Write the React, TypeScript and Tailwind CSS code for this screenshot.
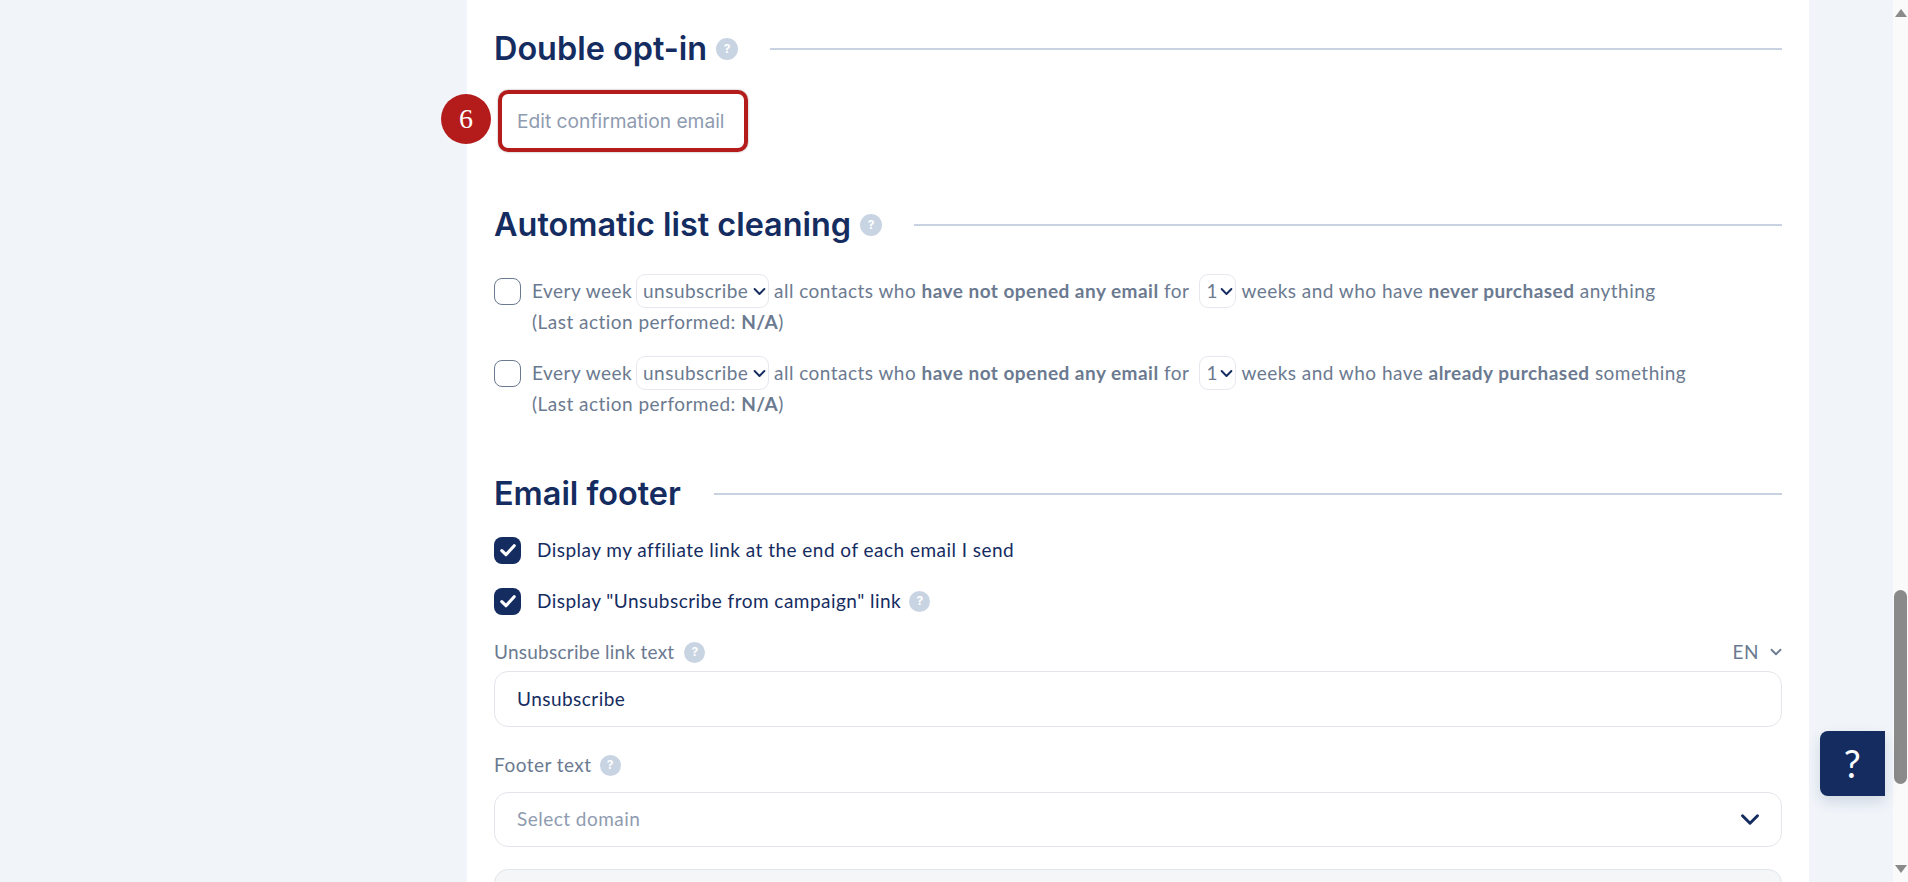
import React from "react";

const body = "font-['Lato','Noto_Sans',sans-serif] tracking-[0.47px]";

function Help({ size = "w-[21px] h-[21px]", text = "text-[12px]" }: { size?: string; text?: string }) {
  return (
    <span className={`${size} ${text} shrink-0 rounded-full bg-[#c9d4e3] text-white font-bold flex items-center justify-center tracking-normal font-['Inter',sans-serif]`}>?</span>
  );
}

function Heading({ title, help }: { title: string; help?: boolean }) {
  return (
    <div className="flex items-center h-[40px]">
      <h2 className="font-['Inter',sans-serif] font-semibold text-[32.4px] leading-[40px] text-[#152c61] tracking-normal whitespace-nowrap">{title}</h2>
      {help && <span className="ml-[9px]"><Help size="w-[22px] h-[22px]" /></span>}
      <div className={`flex-1 h-[2px] bg-[#c9d2e0] ${help ? "ml-[32px]" : "ml-[33px]"}`} />
    </div>
  );
}

function Chev({ className = "" }: { className?: string }) {
  return (
    <svg viewBox="0 0 16 10" className={className} fill="none" stroke="currentColor" strokeWidth="2.4" strokeLinecap="round" strokeLinejoin="round">
      <path d="M2 2l6 6 6-6" />
    </svg>
  );
}

function MiniSelect({ value, w }: { value: string; w: string }) {
  return (
    <span className={`${w} h-[34px] inline-flex items-center justify-between pl-[6px] pr-[2px] ml-[4px] mr-[5px] rounded-[9px] border border-[#e5e8ee] text-[#6b7a90] text-[19px] align-middle shrink-0`}>
      <span>{value}</span>
      <Chev className="w-[13px] h-[9px] text-[#152c61]" />
    </span>
  );
}

function CleanRow({ strong, tail }: { strong: string; tail: string }) {
  return (
    <div className="flex items-start">
      <span className="mt-[6px] w-[27px] h-[27px] shrink-0 rounded-[8px] border border-[#6b7a90] bg-white" />
      <div className="ml-[11px] text-[19px] leading-[30px] text-[#6b7a90] whitespace-nowrap">
        <div className="flex items-center h-[38px]">
          <span>Every week</span>
          <MiniSelect value="unsubscribe" w="w-[133px]" />
          <span>all contacts who&nbsp;</span>
          <b className="font-bold">have not opened any email</b>
          <span>&nbsp;for</span>
          <span className="ml-[6px]"><MiniSelect value="1" w="w-[37px]" /></span>
          <span>weeks and who have&nbsp;</span>
          <b className="font-bold">{strong}</b>
          <span>&nbsp;{tail}</span>
        </div>
        <div className="mt-[-3px]">(Last action performed: <b className="font-bold">N/A</b>)</div>
      </div>
    </div>
  );
}

function Checked({ label, help }: { label: string; help?: boolean }) {
  return (
    <div className="flex items-center h-[28px]">
      <span className="w-[27px] h-[27px] rounded-[8px] bg-[#152c61] flex items-center justify-center shrink-0">
        <svg viewBox="0 0 16 16" className="w-[18px] h-[18px]" fill="none" stroke="white" strokeWidth="2.8" strokeLinecap="round" strokeLinejoin="round">
          <path d="M2.5 8.5l3.7 3.7 7.3-8" />
        </svg>
      </span>
      <span className="ml-[16px] text-[19px] text-[#152c61] whitespace-nowrap">{label}</span>
      {help && <span className="ml-[8px]"><Help /></span>}
    </div>
  );
}

export default function App() {
  return (
    <div className={`h-screen overflow-hidden flex bg-[#f1f5fa] ${body}`}>
      <div className="flex-1 min-w-0 flex relative">
        <div className="w-[467px] shrink-0" />
        <main className="w-[1342px] shrink-0 bg-white pl-[27px] pr-[27px] pt-[29px]">
          <Heading title="Double opt-in" help />
          <div className="relative mt-[21px] ml-[4px] w-[250px] h-[62px] rounded-[10px] border-[4px] border-[#b41c1c] flex items-center pl-[15px] text-[19.2px] tracking-normal text-[#8f9bb0] whitespace-nowrap shadow-[0_0_2px_rgba(0,0,0,0.4)] font-['Inter',sans-serif]">
            Edit confirmation email
            <span className="absolute left-[-61px] top-[0px] w-[50px] h-[50px] rounded-full bg-[#b41c1c] text-white text-[28px] flex items-center justify-center font-['Liberation_Serif',serif]">6</span>
          </div>

          <div className="mt-[53px]"><Heading title="Automatic list cleaning" help /></div>
          <div className="mt-[27px]"><CleanRow strong="never purchased" tail="anything" /></div>
          <div className="mt-[17px]"><CleanRow strong="already purchased" tail="something" /></div>

          <div className="mt-[55px]"><Heading title="Email footer" /></div>
          <div className="mt-[22px]"><Checked label="Display my affiliate link at the end of each email I send" /></div>
          <div className="mt-[23px]"><Checked label={'Display "Unsubscribe from campaign" link'} help /></div>

          <div className="mt-[24px] flex items-center h-[26px] text-[19px] text-[#6b7a90]">
            <span className="tracking-[0.25px]">Unsubscribe link text</span>
            <span className="ml-[10px]"><Help /></span>
            <span className="ml-auto">EN</span>
            <Chev className="ml-[11px] w-[12px] h-[8px]" />
          </div>
          <div className="mt-[6px] h-[56px] rounded-[14px] border border-[#e2e5ea] flex items-center px-[22px] text-[19px] text-[#152c61]">Unsubscribe</div>

          <div className="mt-[25px] flex items-center h-[26px] text-[19px] text-[#6b7a90]">
            <span>Footer text</span>
            <span className="ml-[8px]"><Help /></span>
          </div>
          <div className="mt-[14px] h-[55px] rounded-[14px] border border-[#e2e5ea] flex items-center justify-between pl-[22px] pr-[21px] text-[19px] text-[#8f9bb0]">
            <span>Select domain</span>
            <Chev className="w-[20px] h-[13px] text-[#152c61]" />
          </div>
          <div className="mt-[22px] h-[60px] rounded-[14px] border border-[#e2e5ea] bg-[#f5f6f8]" />
        </main>
        <div className="absolute right-[8px] top-[731px] w-[65px] h-[65px] rounded-l-[8px] bg-[#152c61] text-white flex items-center justify-center text-[38px] shadow-[0_6px_14px_rgba(21,44,97,0.15)] font-['Lato',sans-serif]">?</div>
      </div>
      <aside className="w-[15px] shrink-0 bg-[#fafafa] flex flex-col items-center">
        <svg viewBox="0 0 12 8" className="mt-[9px] w-[12px] h-[8px] shrink-0 fill-[#8a8a8a]"><path d="M6 0l6 8H0z" /></svg>
        <span className="mt-[573px] w-[13px] h-[194px] rounded-full bg-[#8a8a8a]" />
        <svg viewBox="0 0 12 8" className="mt-auto mb-[9px] w-[12px] h-[8px] shrink-0 fill-[#8a8a8a]"><path d="M0 0h12L6 8z" /></svg>
      </aside>
    </div>
  );
}
